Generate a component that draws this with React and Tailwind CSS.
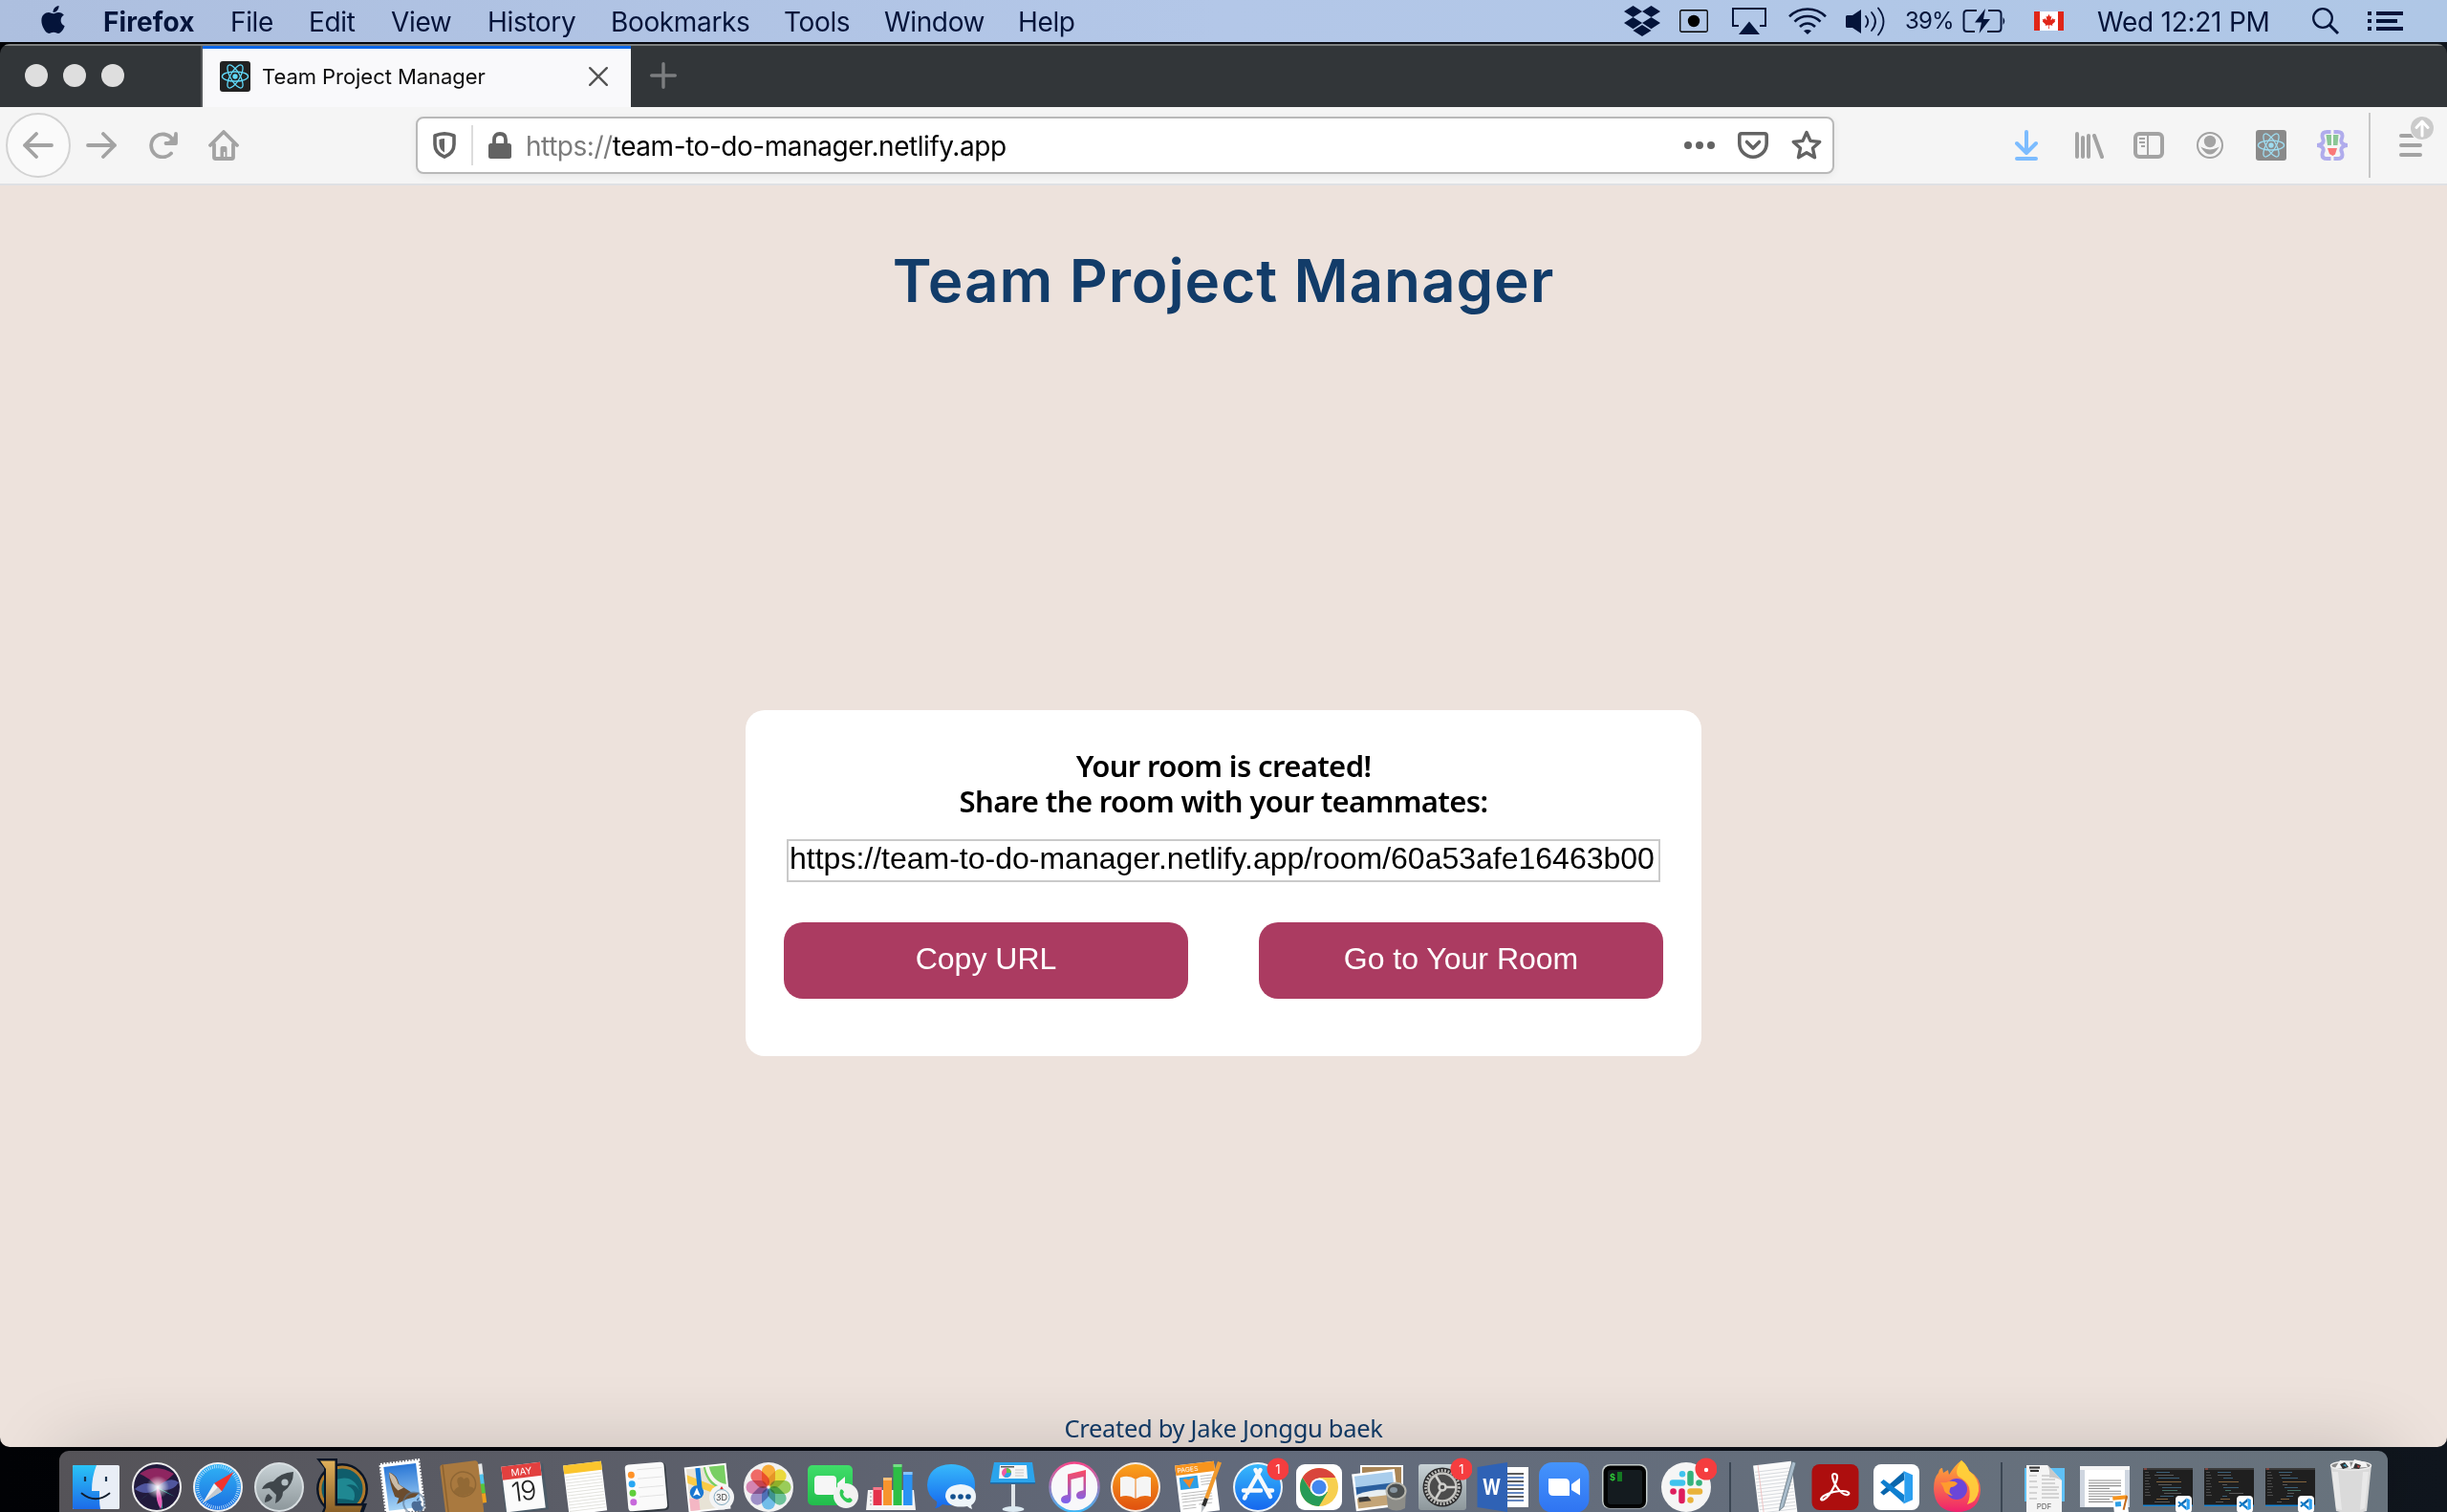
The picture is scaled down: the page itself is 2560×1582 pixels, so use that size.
import React from "react";
import { FaApple, FaDropbox, FaCanadianMapleLeaf } from "react-icons/fa";

const UI = "font-['Inter','Liberation_Sans',sans-serif]";

function ReactMark({ className, bg, fg }) {
  return (
    <svg viewBox="0 0 32 32" className={className}>
      <rect width="32" height="32" rx="3" fill={bg} />
      <circle cx="16" cy="16" r="2.7" fill={fg} />
      <g fill="none" stroke={fg} strokeWidth="1.3">
        <ellipse cx="16" cy="16" rx="13.6" ry="5" />
        <ellipse cx="16" cy="16" rx="13.6" ry="5" transform="rotate(60 16 16)" />
        <ellipse cx="16" cy="16" rx="13.6" ry="5" transform="rotate(120 16 16)" />
      </g>
    </svg>
  );
}

/* ---------- macOS menu bar ---------- */

const menus = [
  ["File", "w-[82px]"],
  ["Edit", "w-[86px]"],
  ["View", "w-[101px]"],
  ["History", "w-[129px]"],
  ["Bookmarks", "w-[181px]"],
  ["Tools", "w-[105px]"],
  ["Window", "w-[140px]"],
  ["Help", "w-[80px]"],
];

function MenuBar() {
  return (
    <div className={`flex h-11 shrink-0 items-center bg-linear-to-r from-[#adbfdf] via-[#b3c7e8] to-[#afc7e6] text-[28px] leading-[44px] text-[#04143a] ${UI}`}>
      <FaApple className="-mt-1 ml-[39px] h-[33px] w-[33px] shrink-0" />
      <span className="ml-[36px] w-[133px] pt-px text-[28px] font-bold tracking-[0.1px]">Firefox</span>
      {menus.map(([label, width]) => (
        <span key={label} className={`${width} pt-px tracking-[-0.35px]`}>{label}</span>
      ))}
      <div className="ml-auto flex h-11 items-center">
        <FaDropbox className="h-[38px] w-[38px]" />
        <svg viewBox="0 0 30 24" className="ml-5 h-6 w-[30px]">
          <rect x="0.75" y="0.75" width="28.5" height="22.5" rx="1.5" fill="none" stroke="#000" strokeWidth="1.3" />
          <circle cx="15" cy="12" r="6.2" fill="#000" />
        </svg>
        <svg viewBox="0 0 36 28" className="ml-[25px] h-7 w-9">
          <path d="M7 19H1V1h34v18h-6" fill="none" stroke="currentColor" strokeWidth="2" />
          <path d="M18 14.5L29 28H7z" fill="currentColor" />
        </svg>
        <svg viewBox="0 0 40 28" className="ml-[23px] h-7 w-10">
          <g fill="none" stroke="currentColor" strokeWidth="2.6">
            <path d="M1 9.2Q9 1.5 20 1.5T39 9.2" />
            <path d="M6.500 14.600Q12 9 20 9t13.500 5.600" />
            <path d="M12 20q3.500-3.500 8-3.500t8 3.500" />
          </g>
          <path d="M20 28l-4-3.800q4-2.600 8 0z" fill="currentColor" />
        </svg>
        <svg viewBox="0 0 41 31" className="ml-[20px] h-[31px] w-[41px]">
          <path d="M0 10.500Q0 9 1.500 9H7l9-6v25l-9-6H1.500Q0 22 0 20.500z" fill="currentColor" />
          <g fill="none" stroke="currentColor" strokeWidth="1.8" strokeLinecap="round">
            <path d="M21 10q4.500 5.500 0 11" />
            <path d="M27 6q8 9.500 0 19" />
            <path d="M34 1.500q11 14 0 28" />
          </g>
        </svg>
        <span className="ml-[21px] w-[52px] text-[24px] tracking-[-0.9px]">39%</span>
        <svg viewBox="0 0 46 26" className="ml-2 h-[26px] w-[46px]">
          <path d="M15 2H5Q1.500 2 1.500 5.500v15Q1.500 24 5 24h8M27 2h10q3.500 0 3.500 3.500v15Q40.500 24 37 24H26" fill="none" stroke="currentColor" strokeWidth="2" />
          <path d="M42.500 9q3.500 4 0 8z" fill="currentColor" />
          <path d="M24 0L13 14.500h7L17.500 26 29 11h-7z" fill="currentColor" />
        </svg>
        <span className="ml-[29px] flex h-5 w-[31px] items-center justify-center border-x-[6px] border-[#e02618] bg-white">
          <FaCanadianMapleLeaf className="h-[15px] w-[15px] shrink-0 text-[#e02618]" />
        </span>
        <span className="ml-[35px] w-[184px] pt-px whitespace-nowrap tracking-[-0.25px]">Wed 12:21 PM</span>
        <svg viewBox="0 0 30 30" className="ml-10 h-[30px] w-[30px]" fill="none" stroke="currentColor">
          <circle cx="12" cy="12" r="9.800" strokeWidth="2.300" />
          <path d="M19 19l9 9" strokeWidth="3" />
        </svg>
        <svg viewBox="0 0 37 20" className="mr-[46px] ml-[29px] h-5 w-[37px]" fill="currentColor">
          <path d="M0 0h4v4H0zM9 0h28v4H9zM0 8h4v4H0zM9 8h22v4H9zM0 16h4v4H0zM9 16h28v4H9z" />
        </svg>
      </div>
    </div>
  );
}

/* ---------- Browser chrome ---------- */

function TabStrip() {
  return (
    <div className="flex h-[66px] shrink-0 border-t-2 border-[#7d8080] bg-[#323639]">
      <div className="flex w-[212px] items-center gap-4 border-r-2 border-[#55585b] pb-0.5 pl-[26px]">
        <span className="h-6 w-6 rounded-full bg-[#dedede]" />
        <span className="h-6 w-6 rounded-full bg-[#dedede]" />
        <span className="h-6 w-6 rounded-full bg-[#dedede]" />
      </div>
      <div className="flex w-[448px] items-center border-t-[3px] border-[#0a66e8] bg-[#f9f9fb] pb-[3px] pl-[18px]">
        <ReactMark className="h-8 w-8" bg="#222222" fg="#61dafb" />
        <span className={`ml-3 text-[22px] leading-[30px] text-[#0c0c0d] tracking-[-0.05px] ${UI}`}>Team Project Manager</span>
        <svg viewBox="0 0 20 20" className="mr-6 ml-auto h-5 w-5" stroke="#555" strokeWidth="2.400" strokeLinecap="round">
          <path d="M1.200 1.200l17.600 17.600M18.800 1.200L1.200 18.800" />
        </svg>
      </div>
      <svg viewBox="0 0 28 28" className="mt-[17px] ml-5 h-7 w-7" stroke="#7c7e80" strokeWidth="3.400" strokeLinecap="round">
        <path d="M14 1.700v24.600M1.700 14h24.600" />
      </svg>
    </div>
  );
}

function Toolbar() {
  return (
    <div className="flex h-[82px] shrink-0 items-center border-b-2 border-[#dfe0e4] bg-[#f5f5f5] text-[#a3a3a3]">
      <div className="ml-1.5 flex h-[68px] w-[68px] items-center justify-center rounded-full border-2 border-[#d2d2d2] bg-[#fafafa]">
        <svg viewBox="0 0 32 28" className="h-7 w-8" fill="none" stroke="currentColor" strokeWidth="3.800" strokeLinecap="round" strokeLinejoin="round">
          <path d="M14 2L2 14l12 12M2 14h28" />
        </svg>
      </div>
      <svg viewBox="0 0 32 28" className="ml-4 h-7 w-8" fill="none" stroke="currentColor" strokeWidth="3.800" strokeLinecap="round" strokeLinejoin="round">
        <path d="M18 2l12 12-12 12M30 14H2" />
      </svg>
      <svg viewBox="0 0 32 28" className="ml-[33px] h-7 w-8" fill="none" stroke="currentColor" strokeWidth="3.800" strokeLinecap="round">
        <path d="M24 22.500A12 12 0 1 1 25 7.500" />
        <path d="M29 2v10H18.500" strokeLinejoin="round" />
        <path d="M29 3v9h-9z" fill="currentColor" strokeWidth="1" />
      </svg>
      <svg viewBox="0 0 32 32" className="ml-[31px] h-8 w-8" fill="none" stroke="currentColor" strokeWidth="3.800" strokeLinecap="round" strokeLinejoin="round">
        <path d="M2 16L16 2l14 14" />
        <path d="M6 15v13.500q0 1.500 1.500 1.500h17q1.500 0 1.500-1.500V15" />
        <path d="M12.500 31V19q0-2 2-2h3q2 0 2 2v12h-2v-8h-1.500v8z" fill="currentColor" stroke="none" />
      </svg>
      <div className="ml-[185px] flex h-[60px] w-[1484px] items-center rounded-lg border-2 border-[#b9b9b9] bg-white text-[#636363] shadow-[0_2px_8px_rgba(0,0,0,0.06)]">
        <svg viewBox="0 0 24 28" className="ml-4 h-7 w-6">
          <path d="M12 1.800Q17 2 22 4v9q0 9-10 13.200Q2 22 2 13V4q5-2 10-2.200z" fill="none" stroke="currentColor" strokeWidth="3.600" strokeLinejoin="round" />
          <path d="M12 7v14.500q-5.500-3-5.500-9V8q2.500-1 5.500-1z" fill="currentColor" />
        </svg>
        <span className="ml-[16px] h-[42px] w-0.5 bg-[#dcdcdc]" />
        <svg viewBox="0 0 24 28" className="ml-4 h-7 w-6">
          <path d="M6 13V8q0-6 6-6t6 6v5" fill="none" stroke="currentColor" strokeWidth="3.800" />
          <rect y="12" width="24" height="16" rx="2.500" fill="currentColor" />
        </svg>
        <div className={`ml-[15px] pt-0.5 text-[28px] leading-10 tracking-[-0.45px] text-black ${UI}`}>
          <span className="text-[#7b7b7b]">https://</span>team-to-do-manager.netlify.app
        </div>
        <div className="ml-auto flex items-center gap-6 pr-[11px]">
          <svg viewBox="0 0 32 8" className="h-2 w-8" fill="currentColor">
            <circle cx="4" cy="4" r="4" /><circle cx="16" cy="4" r="4" /><circle cx="28" cy="4" r="4" />
          </svg>
          <svg viewBox="0 0 32 28" className="h-7 w-8" fill="none" stroke="currentColor" strokeWidth="3.600" strokeLinecap="round" strokeLinejoin="round">
            <path d="M4 1.800h24q2.200 0 2.200 2.200v8A14.200 14.200 0 0 1 1.800 12V4q0-2.200 2.200-2.200z" />
            <path d="M9.500 10.500l6.500 6.500 6.500-6.500" />
          </svg>
          <svg viewBox="0 0 32 32" className="h-8 w-8" fill="none" stroke="currentColor" strokeWidth="3.400" strokeLinejoin="round">
            <path d="M16 2.500l4 8.900 9.700 1.100-7.200 6.600 2 9.600L16 23.800l-8.500 4.900 2-9.600-7.200-6.600 9.700-1.100z" />
          </svg>
        </div>
      </div>
      <div className="ml-[169px] grid w-[384px] grid-cols-6 items-center justify-items-center">
        <svg viewBox="0 0 24 32" className="h-8 w-6" fill="none" stroke="#7cbcff" strokeWidth="4" strokeLinecap="round" strokeLinejoin="round">
          <path d="M12 2v22M2 14l10 10 10-10M2 30h20" />
        </svg>
        <svg viewBox="0 0 30 28" className="ml-1 h-7 w-[30px]" stroke="currentColor" strokeWidth="4" strokeLinecap="round">
          <path d="M2 2v24M8 6v20M14 4v22M20 4l8 22" />
        </svg>
        <svg viewBox="0 0 32 28" className="h-7 w-8" fill="none" stroke="currentColor">
          <rect x="2" y="2" width="28" height="24" rx="4" strokeWidth="4" />
          <path d="M15 3v22M6 7h6M6 11h6M8 15h4" strokeWidth="2" />
        </svg>
        <svg viewBox="0 0 28 28" className="h-7 w-7" fill="currentColor">
          <circle cx="14" cy="14" r="13" fill="none" stroke="currentColor" strokeWidth="2" />
          <circle cx="14" cy="10" r="6.200" />
          <path d="M6.500 17.500Q14 28 21.500 17.500q-7.500 3.500-15 0z" stroke="currentColor" strokeWidth="1.500" />
        </svg>
        <ReactMark className="h-8 w-8" bg="#8a8a8a" fg="#9edcf0" />
        <svg viewBox="0 0 32 32" className="h-8 w-8">
          <g fill="none" stroke="#b0acec" strokeWidth="4">
            <path d="M14.500 2H10.500Q5.500 2 5.500 6q0 2 1 4 1.200 5-6.500 6 7.700 1 6.500 6-1 2-1 4 0 4 5 4h4" />
            <path d="M17.500 2H21.500q5 0 5 4 0 2-1 4-1.200 5 6.500 6-7.700 1-6.500 6 1 2 1 4 0 4-5 4h-4" />
          </g>
          <path d="M9.500 5h5.500v11h-4zM17 5h5.500L21.500 16H17z" fill="#8bc795" />
          <path d="M11 19h10l-2 6.500-2.500 1.500-3.500-2z" fill="#fa7878" />
        </svg>
      </div>
      <span className="ml-1.5 h-[68px] w-0.5 bg-[#c8c8c8]" />
      <svg viewBox="0 0 36 44" className="ml-[30px] h-11 w-9 -translate-y-[8px]" fill="none" stroke="currentColor" strokeLinecap="round">
        <path d="M2 20h20M2 30h20M2 40h20" strokeWidth="4" />
        <circle cx="24" cy="12" r="13" fill="#f5f5f5" stroke="none" />
        <circle cx="24" cy="12" r="12" fill="#cbcbcb" stroke="none" />
        <path d="M24 20V5M18 11.500l6-6.500 6 6.500" stroke="#fff" strokeWidth="3" strokeLinejoin="round" />
      </svg>
    </div>
  );
}

/* ---------- Web page ---------- */

function Page() {
  return (
    <main className="flex flex-1 flex-col items-center bg-[#ede2dc]">
      <h1 className="mt-[62px] font-['Inter',sans-serif] text-[62px] leading-[76px] font-semibold tracking-[0.9px] text-[#123c69]">Team Project Manager</h1>
      <section className="mt-[411px] flex h-[362px] w-[1000px] flex-col rounded-[20px] bg-white px-10 pt-10">
        <h3 className="text-center font-['Noto_Sans',sans-serif] text-[31px] leading-[37px] font-semibold tracking-[-0.63px] text-black">
          Your room is created!<br />Share the room with your teammates:
        </h3>
        <div className="mx-[3px] mt-[21px] h-[45px] overflow-hidden border-2 border-[#cacaca] bg-white pl-px font-['Liberation_Sans',sans-serif] text-[32px] leading-9 whitespace-nowrap text-black">
          https://team-to-do-manager.netlify.app/room/60a53afe16463b00
        </div>
        <div className="mt-[42px] flex justify-between font-['Liberation_Sans',sans-serif] text-[32px] leading-9 text-white">
          <button className="h-20 w-[423px] rounded-[20px] bg-[#ab3b61] pb-[5px]">Copy URL</button>
          <button className="h-20 w-[423px] rounded-[20px] bg-[#ab3b61] pb-[5px]">Go to Your Room</button>
        </div>
      </section>
      <footer className="mt-auto mb-0.5 font-['Noto_Sans',sans-serif] text-[25.5px] leading-9 tracking-[-0.3px] text-[#123c69]">Created by Jake Jonggu baek</footer>
    </main>
  );
}

/* ---------- Dock ---------- */

function VSMark({ transform }) {
  return (
    <g transform={transform}>
      <path d="M73 2L2 65l10 9 63-47z" fill="#0866ad" />
      <path d="M73 98L2 35l10-9 63 47z" fill="#0f7fd0" />
      <path d="M72 0l28 12v76L72 100l3-12V12z" fill="#2b9ff0" />
    </g>
  );
}

function Badge({ label }) {
  return (
    <g>
      <circle cx="53" cy="13" r="11.500" fill="#f53d3f" />
      {label ? (
        <text x="53" y="18" textAnchor="middle" fontFamily="Inter" fontSize="13" fill="#fff">{label}</text>
      ) : (
        <circle cx="53" cy="14" r="2.200" fill="#fff" />
      )}
    </g>
  );
}

function range(n) {
  return Array.from({ length: n }, (_, i) => i);
}

const codeLines = [
  [14, 4, 14, "#4b83a8"], [12, 7, 20, "#777"], [16, 10, 22, "#4b83a8"], [14, 14, 26, "#b98a50"],
  [16, 17, 14, "#777"], [20, 20, 20, "#4b83a8"], [20, 23, 16, "#5c9e8d"], [22, 26, 18, "#777"],
  [18, 29, 14, "#4b83a8"], [14, 32, 12, "#b98a50"], [12, 35, 16, "#777"],
];

function CodeWindow({ shift = 0 }) {
  return (
    <>
      <rect x="6" y="12" width="52" height="40" fill="#1f1f1f" />
      <rect x="6" y="12" width="52" height="2" fill="#3a3a3a" />
      <path d="M7 13h3" stroke="#c05046" />
      <rect x="6" y="50.500" width="52" height="1.500" fill="#1785d6" />
      <g opacity="0.65">
        {codeLines.map(([x, y, w, c], i) => (
          <rect key={i} x={6 + x + ((i * shift) % 5)} y={12 + y} width={Math.max(5, w - ((i * shift * 3) % 13))} height="1" fill={c} />
        ))}
        {range(9).map((i) => (
          <rect key={i} x="8" y={16 + i * 3} width={4 + (i % 3)} height="0.800" fill="#777" />
        ))}
      </g>
      <rect x="40" y="41" width="17" height="18" rx="4" fill="#fff" />
      <VSMark transform="translate(42 43.500) scale(0.128)" />
    </>
  );
}

const petals = ["#f9a11b", "#e9d51f", "#8cc63f", "#55b98a", "#5bb5e8", "#8f7fc0", "#cf72a8", "#ef5350"];

const icons = {
  finder: (
    <>
      <rect x="8" y="9" width="49" height="46" rx="1.500" fill="#e9eef6" />
      <path d="M33 9H9.500Q8 9 8 10.500V53.500Q8 55 9.500 55H37q-1-5-1-10v-9h-8q0-15 5-27z" fill="url(#blue)" />
      <path d="M21 21v5M43 21v5" stroke="#16324d" strokeWidth="2.200" />
      <path d="M17.500 38.500Q32 50 46.500 38.500" fill="none" stroke="#111c2b" strokeWidth="1.800" strokeLinecap="round" />
    </>
  ),
  siri: (
    <>
      <circle cx="32" cy="32" r="26" fill="#eee" />
      <circle cx="32" cy="32" r="24" fill="#211a3c" />
      <path d="M14 18Q30 6 50 18 44 24 33 32 24 22 14 18z" fill="#b32a6c" opacity="0.75" />
      <path d="M9 34Q20 24 33 31 46 20 55 27 48 38 34 34 20 42 9 34z" fill="#6f7fe0" opacity="0.6" />
      <path d="M14 46l19-14 18 10Q42 38 34 34q4 12 4 21-7-8-6-21-8 4-18 12z" fill="#3fd0b8" opacity="0.8" />
      <path d="M32 33q-2 12 4 22 4-8-2-22z" fill="#e560b8" />
      <circle cx="33" cy="32" r="12" fill="url(#glow)" />
    </>
  ),
  safari: (
    <>
      <circle cx="32" cy="32" r="26" fill="#eef0f2" />
      <circle cx="32" cy="32" r="24" fill="url(#sky)" />
      <circle cx="32" cy="32" r="21.500" fill="none" stroke="#d7effc" strokeWidth="3.500" strokeDasharray="0.700 1.550" />
      <path d="M48.500 16L36 36.500 28 28z" fill="#f2332d" />
      <path d="M16 48.500L28 28l8 8.500z" fill="#f2f2f2" />
      <path d="M16 48.500L32 32l4 4.500z" fill="#c4c9ce" />
    </>
  ),
  launchpad: (
    <>
      <circle cx="32" cy="32" r="26" fill="#d9dfe2" />
      <circle cx="32" cy="32" r="24" fill="url(#silver)" />
      <path d="M47 16q-14 1-21 10-8 0-12 8l8-1 7 7-1 9q8-4 8-12 11-7 11-21z" fill="#3f464b" />
      <path d="M21 39q-4 2-4 9 6-1 8-5z" fill="#3f464b" />
      <circle cx="38" cy="27" r="3.600" fill="#b4bfc4" />
    </>
  ),
  league: (
    <>
      <circle cx="34" cy="34" r="27" fill="#0a1526" />
      <circle cx="34" cy="34" r="23" fill="#0f5d6b" stroke="#b07a2c" strokeWidth="3" />
      <path d="M28 24q18-6 24 12-4-9-14-6 12 4 8 16-8-2-18-2z" fill="#2aa5ab" opacity="0.6" />
      <path d="M7 2h22v47h31l-6 16H10l5-12V12z" fill="#0a1526" />
      <path d="M11 4.500h15.500v47H55l-5 14H13l4-12V13z" fill="url(#gold)" />
    </>
  ),
  mail: (
    <g transform="rotate(-7 32 32)">
      <rect x="13" y="6" width="40" height="52" fill="none" stroke="#fff" strokeWidth="3" strokeDasharray="2 1.300" />
      <rect x="13" y="6" width="40" height="52" fill="#fff" />
      <rect x="16" y="9" width="34" height="46" fill="url(#mailsky)" />
      <path d="M21 15q8 3 9 14l12 10 8 1-5 4-9 1-11 4 3-6-4-2q-4-14-3-26z" fill="#6b4c2e" />
      <path d="M21 15q7 4 8 13l5 5-6 2q-7-8-7-20z" fill="#c9bba8" />
      <circle cx="43" cy="50" r="11" fill="none" stroke="#5a738f" strokeWidth="2" opacity="0.6" />
      <FaApple x="38" y="44" width="10" height="10" color="#4b6c96" />
    </g>
  ),
  contacts: (
    <g transform="rotate(-7 32 32)">
      <path d="M50 10h5v12h-5z" fill="#e4e7e9" /><path d="M50 21h5v11h-5z" fill="#4fc3ee" />
      <path d="M50 31h5v10h-5z" fill="#58c43c" /><path d="M50 41h5v10h-5z" fill="#f0a01e" />
      <rect x="11" y="6" width="40" height="56" rx="3" fill="#a9793f" />
      <path d="M14 6v56" stroke="#8d622e" strokeWidth="1.500" />
      <circle cx="33" cy="29" r="13" fill="none" stroke="#8e6634" strokeWidth="1.500" />
      <path d="M22 36q2-4 6-5-3-10 3-10 3 0 3 3 6-4 6 4-1 3-1 4 4 1 5 4-5 5-11 5t-11-5z" fill="#8e6634" opacity="0.85" />
    </g>
  ),
  calendar: (
    <g transform="rotate(-7 32 32)">
      <rect x="10" y="10" width="45" height="48" fill="#4b5a66" />
      <rect x="11" y="8" width="41" height="48" fill="#fbfbfb" />
      <rect x="11" y="8" width="41" height="14" fill="#e2403f" />
      <text x="31.500" y="19" textAnchor="middle" fontFamily="Inter" fontSize="10" fill="#fff">MAY</text>
      <text x="31" y="46" textAnchor="middle" fontFamily="Inter" fontWeight="300" fontSize="28" letterSpacing="-1.500" fill="#222">19</text>
    </g>
  ),
  notes: (
    <g transform="rotate(-7 32 32)">
      <rect x="12" y="7" width="40" height="52" fill="#fff" />
      <path d="M12 7h40v9H12z" fill="#fbc52d" />
      {range(12).map((i) => <path key={i} d="M13 0h38" transform={`translate(0 ${19 + i * 3.3})`} stroke="#dcdcd6" strokeWidth="0.800" />)}
    </g>
  ),
  reminders: (
    <g transform="rotate(-5 32 32)">
      <rect x="13" y="8" width="41" height="50" rx="4" fill="#333a41" />
      <rect x="11.500" y="7" width="41" height="49" rx="4" fill="#fafafa" />
      {["#ff9227", "#27a7f3", "#60cf3b", "#c768db"].map((c, i) => (
        <g key={c}>
          <circle cx="17.500" cy={18 + i * 9.500} r="3.500" fill={c} />
          <path d="M24 0h26" transform={`translate(0 ${13 + i * 9.5})`} stroke="#ddd" strokeWidth="0.800" />
        </g>
      ))}
    </g>
  ),
  maps: (
    <>
      <g transform="rotate(-6 32 32)">
        <rect x="10" y="9" width="44" height="48" fill="#fff" />
        <rect x="12" y="11" width="40" height="44" fill="#e8e3d6" />
        <path d="M30 11h22v26Q32 34 30 11z" fill="#79cf63" />
        <path d="M34 11q2 18 18 22" stroke="#f7f6ef" strokeWidth="4" fill="none" />
        <path d="M12 26l40 20v-8L12 17z" fill="#fbcb45" />
        <path d="M12 42h10v13H12z" fill="#f4b7c4" />
        <path d="M24 11v24" stroke="#1478d4" strokeWidth="5" />
      </g>
      <circle cx="21" cy="37.500" r="7.200" fill="#1a77d2" />
      <path d="M21 32.500l4 9-4-2-4 2z" fill="#fff" />
      <circle cx="47" cy="42.500" r="13" fill="#f3f4f5" />
      <circle cx="47" cy="42.500" r="8" fill="none" stroke="#82aabf" strokeWidth="1" />
      <path d="M47 31l1.800 3h-3.600z" fill="#e02a2a" />
      <text x="47" y="45.800" textAnchor="middle" fontFamily="Inter" fontSize="9" fill="#444">3D</text>
    </>
  ),
  photos: (
    <>
      <circle cx="32" cy="32" r="26" fill="#f1f1f1" />
      <g opacity="0.85">
        {petals.map((c, i) => <rect key={c} x="25" y="8.500" width="14" height="22" rx="7" fill={c} transform={`rotate(${i * 45} 32 32)`} className="mix-blend-multiply" />)}
      </g>
    </>
  ),
  facetime: (
    <>
      <rect x="9" y="9" width="47" height="42" rx="5" fill="url(#green)" />
      <rect x="16" y="20" width="23" height="20" rx="4" fill="#f6f6f6" />
      <path d="M40 28l8-7v18l-8-7z" fill="#f6f6f6" />
      <circle cx="49" cy="41" r="13" fill="#f1f2f1" />
      <path d="M43 35q2-2 4 2l-1 2q1 4 5 5l2-1q4 2 2 4-3 3-8-1-6-5-4-11z" fill="#2fc956" />
    </>
  ),
  numbers: (
    <>
      <path d="M8 35h48l2 21H6z" fill="#f4f4f4" />
      <path d="M10 38h2M10 42h2M10 46h2M10 50h2" stroke="#999" />
      <rect x="13.500" y="32" width="9" height="19" fill="#e5324b" />
      <rect x="24" y="22" width="9" height="29" fill="#f7942e" />
      <rect x="34.500" y="8" width="9" height="43" fill="#2cbf45" />
      <rect x="45" y="16" width="9.500" height="35" fill="#2a92f3" />
      <path d="M13.500 32h9v3h-9z" fill="#f4788a" /><path d="M24 22h9v3h-9z" fill="#fbc07c" />
      <path d="M34.500 8h9v3h-9z" fill="#75dd86" /><path d="M45 16h9.500v3H45z" fill="#85c4fb" />
    </>
  ),
  messages: (
    <>
      <path d="M31 8q25 1 25 22T31 51q-5 0-9-1-4 4-8 4 3-3 2-7Q6 41 6 30 7 9 31 8z" fill="url(#bubble)" />
      <path d="M41 29q16 1 16 13 0 6-5 9l1 4q-3-1-5-3-20 3-23-10 0-12 16-13z" fill="#eef5fa" />
      <circle cx="33" cy="42" r="2.800" fill="#11508f" /><circle cx="41" cy="42" r="2.800" fill="#11508f" /><circle cx="49" cy="42" r="2.800" fill="#11508f" />
    </>
  ),
  keynote: (
    <>
      <path d="M12 6h40l3 21H8z" fill="#2ba4ec" />
      <path d="M8 27h47v1.500H8z" fill="#166db0" />
      <path d="M18 9h28l1 14H17z" fill="#f5f5f5" />
      <path d="M19 10h14v1.500H19z" fill="#555" />
      <circle cx="25" cy="17" r="5" fill="#ef5aa0" />
      <path d="M25 17v-5a5 5 0 0 1 5 5z" fill="#64c24b" /><path d="M25 17h5a5 5 0 0 1-8 4z" fill="#28a3e8" />
      <path d="M34 14h9M34 17h9M34 20h9" stroke="#bbb" strokeWidth="0.800" />
      <rect x="30" y="29" width="4" height="24" fill="#dfe4e8" />
      <ellipse cx="32" cy="55" rx="11.500" ry="3" fill="#dce9f1" />
    </>
  ),
  itunes: (
    <>
      <circle cx="32" cy="32" r="25.500" fill="#f8f8fa" stroke="url(#ring)" strokeWidth="2.500" />
      <path d="M25 18.500l19-4.500v25.500q0 5-5.500 5-4.500 0-4.500-4 0-3.500 4.500-4.500l3-.8V21l-13 3v19q0 6-5.500 6-5 0-5-4 0-3.500 4.500-4.500l2.500-.6z" fill="url(#note)" />
    </>
  ),
  books: (
    <>
      <circle cx="32" cy="32" r="26" fill="#f4ebe2" />
      <circle cx="32" cy="32" r="24" fill="url(#orange)" />
      <path d="M16 22q9-3 15.500 1.500V44Q25 39.500 16 42zM48 22q-9-3-15.500 1.500V44Q39 39.500 48 42z" fill="#f5f5f5" />
    </>
  ),
  pages: (
    <>
      <g transform="rotate(-7 32 32)">
        <rect x="12" y="7" width="41" height="52" fill="#fff" />
        <rect x="12" y="7" width="41" height="10.500" fill="#f7941d" />
        <text x="14" y="15" fontFamily="Inter" fontSize="6.800" fill="#fff">PAGES</text>
        <rect x="15" y="20" width="19" height="13" fill="#2d9fe6" />
        <path d="M18.500 22.500q3-1 6 1 3-2 6-1l-3 4.500-3 5-3-5z" fill="#f0882a" />
        <path d="M37 21h12M37 24h12M37 27h12M37 30h12M15 37h32M15 40h32M15 43h32M15 46h32M15 50h14M32 50h14M15 53h14" stroke="#b8b8b8" strokeWidth="0.900" />
      </g>
      <path d="M54 5l4 1.500-14 38-3.800-1.500z" fill="#f19a2e" />
      <path d="M40.200 43l3.800 1.500-3 8-3.800-1.500z" fill="#2d2d2d" />
      <path d="M37.200 51l3.800 1.500-4.500 7z" fill="#bcc1c5" />
    </>
  ),
  appstore: (
    <>
      <circle cx="32" cy="32" r="26" fill="#edf3f7" />
      <circle cx="32" cy="32" r="24" fill="url(#bubble)" />
      <g stroke="#f7f9fb" strokeWidth="4.500" strokeLinecap="round">
        <path d="M34.500 14L21 38M29.500 14l15.500 28M17 35.500h18M43 35.500h4M19 41.500l-1 2" />
      </g>
      <Badge label="1" />
    </>
  ),
  chrome: (
    <>
      <rect x="8" y="8" width="48" height="48" rx="9" fill="#fff" />
      <circle cx="32" cy="32" r="20" fill="#f7cf4f" />
      <path d="M14.700 22A20 20 0 0 0 32 52l9-15-17 0z" fill="#279b57" />
      <path d="M32 22h17.300A20 20 0 0 0 14.700 22L24 36z" fill="#d9453c" />
      <circle cx="32" cy="32" r="9.500" fill="#fff" />
      <circle cx="32" cy="32" r="7.600" fill="#4487ee" />
    </>
  ),
  preview: (
    <>
      <rect x="11" y="9" width="45" height="35" fill="#fff" /><rect x="13" y="11" width="41" height="31" fill="#a98555" />
      <g transform="rotate(-7 32 32)">
        <rect x="4" y="15" width="45" height="39" fill="#fff" />
        <path d="M6.500 17.500h40V30h-40z" fill="#a9cdec" />
        <path d="M6.500 29h40v9h-40z" fill="#2a5f9f" />
        <path d="M6.500 37q20-5 40 0v5h-40z" fill="#e8eef1" />
        <path d="M6.500 41h40v10.500h-40z" fill="#c3a477" />
        <path d="M8 40h10l3 5H8z" fill="#3c3c3c" />
      </g>
      <path d="M38 34h21l-1 20q-9 5-18 0z" fill="#8d8d88" />
      <ellipse cx="48.500" cy="36" rx="10" ry="8.500" fill="#4b4f50" stroke="#b7b6ae" strokeWidth="2" />
      <ellipse cx="46" cy="35" rx="4" ry="3" fill="#8795a0" />
    </>
  ),
  prefs: (
    <>
      <rect x="8" y="8" width="50" height="48" rx="3" fill="url(#silver)" />
      <circle cx="33" cy="32" r="20.500" fill="#2b2b2c" />
      <circle cx="33" cy="32" r="17.500" fill="none" stroke="#b9b9b6" strokeWidth="3" strokeDasharray="2 1.500" />
      <circle cx="33" cy="32" r="14.500" fill="#4c4c4c" stroke="#c4c4c0" strokeWidth="2.500" />
      <path d="M35 32h13M32 30L26 20M32 34l-6 10" stroke="#d0d0cd" strokeWidth="2.600" />
      <circle cx="33" cy="32" r="3.500" fill="#4c4c4c" stroke="#d0d0cd" strokeWidth="2.500" />
      <Badge label="1" />
    </>
  ),
  word: (
    <>
      <rect x="34" y="11" width="25" height="42" fill="#fff" />
      {range(8).map((i) => <path key={i} d="M37 0h17" transform={`translate(0 ${18 + i * 4})`} stroke={i % 2 ? "#3c68b0" : "#333"} strokeWidth="1.600" />)}
      <path d="M5.500 11L37 6v52L5.500 53z" fill="#2f62b5" />
      <text x="20.500" y="40" textAnchor="middle" fontFamily="Inter" fontWeight="700" fontSize="23" textLength="19" lengthAdjust="spacingAndGlyphs" fill="#fff">W</text>
    </>
  ),
  zoom: (
    <>
      <rect x="6" y="6" width="52.500" height="52.500" rx="14" fill="url(#zoomblue)" />
      <path d="M16 23h17q5 0 5 5v13H21q-5 0-5-5zM40 29l9-6.500v18L40 35z" fill="#fff" />
    </>
  ),
  terminal: (
    <>
      <rect x="8" y="8" width="47.500" height="46.500" rx="8" fill="#c4cccb" />
      <rect x="9.500" y="9.500" width="44.500" height="44.500" rx="7" fill="#020303" />
      <rect x="14" y="14" width="36" height="36" rx="3" fill="#141b1f" />
      <text x="16" y="25" fontFamily="Liberation Mono" fontWeight="700" fontSize="10" fill="#2fd33a">$</text>
      <rect x="24" y="16" width="5" height="10" fill="#147a22" />
    </>
  ),
  slack: (
    <>
      <circle cx="32" cy="32" r="26" fill="#f5f5f5" />
      <g strokeWidth="6.500" strokeLinecap="round">
        <path d="M18 27.500h10" stroke="#3fc3ee" /><path d="M28 18.200v.1" stroke="#3fc3ee" />
        <path d="M36.500 18v9.500" stroke="#34b27c" /><path d="M45.500 27.500h.1" stroke="#34b27c" />
        <path d="M36.500 36.500H46" stroke="#e9b23a" /><path d="M36.500 45.500v.1" stroke="#e9b23a" />
        <path d="M27.500 36.500V46" stroke="#de1c5c" /><path d="M18.500 36.500h.1" stroke="#de1c5c" />
      </g>
      <Badge />
    </>
  ),
  textedit: (
    <>
      <g transform="rotate(-7 32 32)">
        <rect x="13" y="7" width="40" height="54" fill="#fbfbfb" />
        {range(13).map((i) => <path key={i} d="M14 0h38" transform={`translate(0 ${14 + i * 3.6})`} stroke="#cfd3d8" strokeWidth="0.800" />)}
        <path d="M18 7v54" stroke="#eebcbc" strokeWidth="0.800" />
      </g>
      <path d="M51 5l4 1.500-13 46-4.500 4 1-6z" fill="#a9bccb" stroke="#5d6d79" strokeWidth="0.800" />
    </>
  ),
  acrobat: (
    <>
      <rect x="7.500" y="8" width="49" height="48" rx="8" fill="#ad0e0e" />
      <path d="M31 18c5 0 3 7 0 13s-7 12-11 14c-5 2-3-3 2-5 6-3 12-4 18-4s8 3 5 4c-4 1-9-4-12-9s-6-13-2-13z" fill="none" stroke="#fff" strokeWidth="2.200" />
    </>
  ),
  vscode: (
    <>
      <rect x="8" y="8" width="48" height="48" rx="8" fill="#fff" />
      <VSMark transform="translate(14.500 15) scale(0.345)" />
    </>
  ),
  firefox: (
    <>
      <path d="M36 4q6 5 8 11 12 7 12 20Q55 58 31 58 8 57 7 34q0-12 5-17 1-5 4-5l1 5 5-3 1 5q6-10 13-15z" fill="url(#fox)" />
      <path d="M36 4q6 5 8 11 11 8 10 21-2 12-12 14 4-8 2-18-3-7-11-11-5-5 3-17z" fill="#ffd43a" opacity="0.9" />
      <circle cx="31" cy="34" r="11" fill="#6b46d8" />
      <path d="M14 27q5 1 9-1 6-1 9 2-3 4-7 4-4 5 2 9-9-1-10-9z" fill="#ff9b2e" />
    </>
  ),
  pdf: (
    <>
      <path d="M10 12h42v35H10z" fill="#5fc0f5" />
      <path d="M12 9h22l15 16v35H12z" fill="#f4f4f4" />
      <path d="M34 9l15 16q-8-4-13-3 1-8-2-13z" fill="#c9c9c9" />
      <path d="M15 12h11M15 14h9M15 20h8M15 26h8M15 32h9M15 38h8M15 44h8M28 20h8M28 24h14M28 28h14M28 32h18M28 35h16M28 39h18M28 43h18" stroke="#aaa" strokeWidth="0.900" />
      <path d="M15 11.500h11M16 15h9" stroke="#333" strokeWidth="1.800" />
      <text x="30.500" y="54.500" textAnchor="middle" fontFamily="Inter" fontSize="8" fill="#666">PDF</text>
    </>
  ),
  document: (
    <>
      <rect x="4" y="10" width="52" height="43" fill="#cfd6e0" />
      <rect x="4" y="10" width="52" height="4" fill="#f4f4f4" />
      <rect x="9" y="14" width="42" height="39" fill="#fff" />
      {range(9).map((i) => <path key={i} d={i % 4 === 3 ? "M13 0h22" : "M13 0h34"} transform={`translate(0 ${25 + i * 2.8})`} stroke="#8d8d8d" strokeWidth="1.100" />)}
      <g transform="rotate(-6 46 50)">
        <rect x="39" y="41" width="15" height="19" fill="#fff" /><rect x="39" y="41" width="15" height="4" fill="#f7941d" />
        <rect x="41" y="47" width="6" height="5" fill="#2d9fe6" />
        <path d="M54 42L49 56" stroke="#c1691c" strokeWidth="2" />
      </g>
    </>
  ),
  code1: <CodeWindow />,
  code2: <CodeWindow shift={2} />,
  code3: <CodeWindow shift={3} />,
  trash: (
    <>
      <path d="M10 8h43l-5 49q-16 5-32 0z" fill="#dadada" />
      <path d="M18 16l4 40q-5-1-6-2L12 16zM44 16h6l-4 38-5 2z" fill="#e8e8e8" />
      <ellipse cx="31.500" cy="9.500" rx="21" ry="4.500" fill="#8a8a8a" stroke="#ececec" strokeWidth="1.500" />
      <path d="M15 12l5-8 10 1 2 8zM31 12l4-9 12 3 2 5z" fill="#f2f2f2" />
      <path d="M20 8l5-2 4 5-6 2zM36 7l6 2-2 4-6-1z" fill="#333" />
      <path d="M23 9l3-1 1 3z" fill="#3aa6c9" /><path d="M38 9l3 1-2 2z" fill="#c44" />
    </>
  ),
};

function Gradients() {
  const list = [
    ["blue", "#2ac4f7", "#1c6be8"], ["silver", "#c8d2d6", "#8d979b"], ["gold", "#e0b05a", "#7d5420"],
    ["mailsky", "#2a77d6", "#a8d4f5"], ["green", "#3fdd69", "#22bd4c"], ["bubble", "#37b9fb", "#1567ee"],
    ["ring", "#f5478a", "#3fb6f5"], ["note", "#fb4a62", "#7a63f0"], ["orange", "#fba31c", "#e0500f"],
    ["zoomblue", "#4594fc", "#2f74f2"], ["sky", "#2fb2f5", "#1c6fe0"], ["fox", "#ffb52e", "#f0206e"],
  ];
  return (
    <svg className="absolute h-0 w-0">
      <defs>
        {list.map(([id, a, b]) => (
          <linearGradient key={id} id={id} x1="0" y1="0" x2="0" y2="1">
            <stop offset="0" stopColor={a} /><stop offset="1" stopColor={b} />
          </linearGradient>
        ))}
        <radialGradient id="glow">
          <stop offset="0" stopColor="#fff" /><stop offset="1" stopColor="#fff" stopOpacity="0" />
        </radialGradient>
      </defs>
    </svg>
  );
}

const dockGroups = [
  ["finder", "siri", "safari", "launchpad", "league", "mail", "contacts", "calendar", "notes", "reminders", "maps", "photos", "facetime", "numbers", "messages", "keynote", "itunes", "books", "pages", "appstore", "chrome", "preview", "prefs", "word", "zoom", "terminal", "slack"],
  ["textedit", "acrobat", "vscode", "firefox"],
  ["pdf", "document", "code1", "code2", "code3", "trash"],
];

function Dock() {
  return (
    <div className="relative z-10 mx-[62px] mt-1 flex h-16 shrink-0 rounded-t-[10px] bg-linear-to-r from-[#555358] via-[#626a7b] to-[#68737d] pt-1.5 pl-1.5 shadow-[0_0_80px_rgba(0,0,0,0.2)]">
      {dockGroups.map((group, g) => (
        <React.Fragment key={g}>
          {g > 0 && (
            <span className="flex w-7 shrink-0 justify-center pt-1.5">
              <span className="h-full w-0.5 bg-[#3b4653]" />
            </span>
          )}
          {group.map((name) => (
            <svg key={name} viewBox="0 0 64 64" className="h-16 w-16 shrink-0">{icons[name]}</svg>
          ))}
        </React.Fragment>
      ))}
    </div>
  );
}

export default function App() {
  return (
    <div className="flex h-[1582px] w-[2560px] flex-col overflow-hidden bg-linear-to-r from-[#020306] via-[#0a0d16] to-[#10161e]">
      <MenuBar />
      <div className="mt-0.5 flex h-[1468px] shrink-0 flex-col overflow-hidden rounded-[10px]">
        <TabStrip />
        <Toolbar />
        <Page />
      </div>
      <Gradients />
      <Dock />
    </div>
  );
}
